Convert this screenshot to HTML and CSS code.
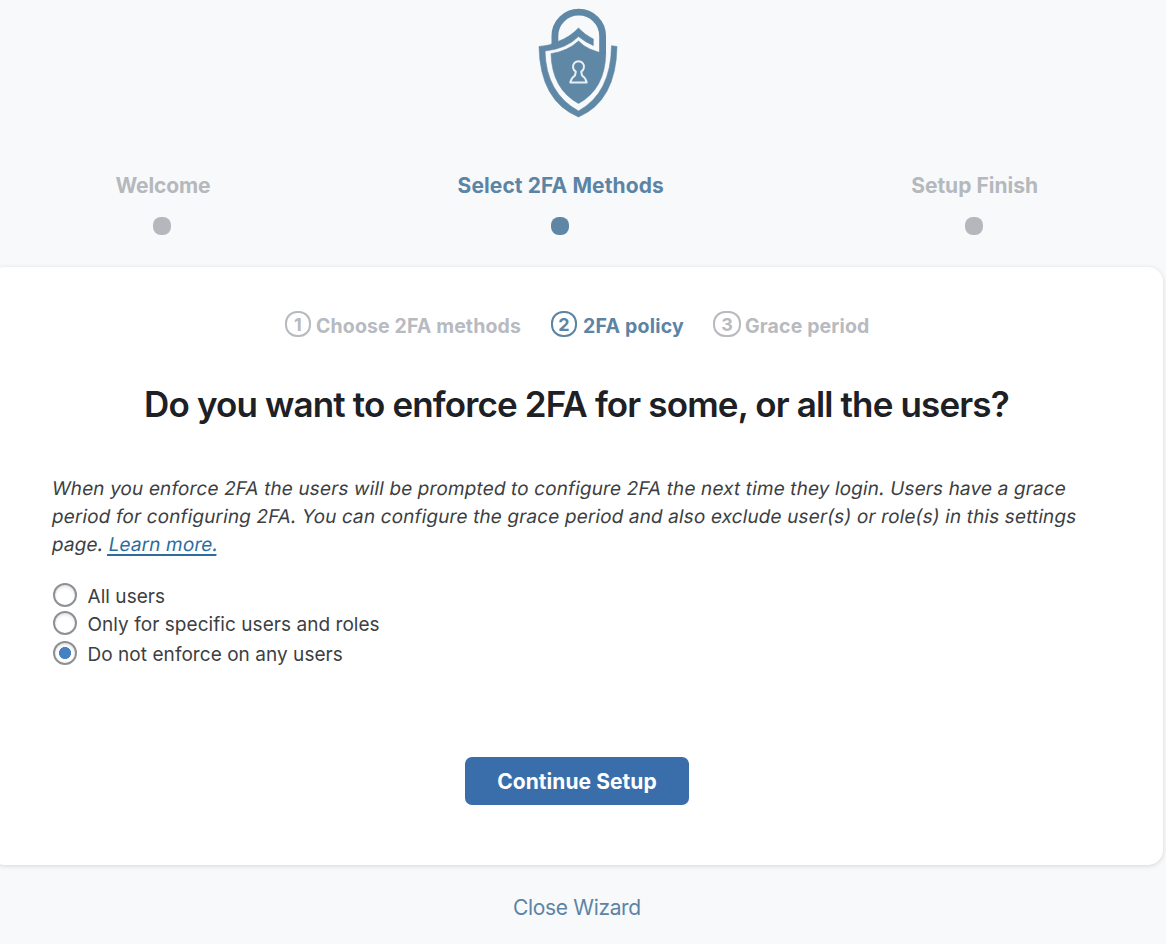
FILE: index.html
```html
<!DOCTYPE html>
<html lang="en">
<head>
<meta charset="utf-8">
<title>2FA Setup Wizard</title>
<link rel="stylesheet" href="styles.css">
</head>
<body>
<header class="brand">
<svg class="logo" viewBox="0 0 100 125" width="100" height="125" aria-hidden="true">
<path class="shackle" d="M26.900 46V36A23.850 23.850 0 0 1 74.600 36V54"/>
<path class="fill" d="M11 46.500Q21 46 30 41.500Q42 37 50.500 28Q57 35 65.300 39V45.500Q57 42 50.500 36.500Q38 49 17 51Q18 93 50.500 111Q83 93 83.500 45.700L89 46.500Q88 101 50.500 117Q12 101 11 46.500Z"/>
<path class="fill" d="M23 53.700Q40 51 50.500 41Q60 51 77.800 53.500Q77 89 50.500 103.500Q24 89 23 53.700Z"/>
<path class="keyhole" d="M47.800 71.500A5.500 5.500 0 1 1 53.200 71.500L54 75.500Q57.800 78 58.700 82.500H42.300Q43.200 78 47 75.500Z"/>
</svg>
</header>
<nav class="steps">
<div class="step step-welcome"><span class="step-name">Welcome</span><i class="dot"></i></div>
<div class="step step-select active"><span class="step-name">Select 2FA Methods</span><i class="dot"></i></div>
<div class="step step-finish"><span class="step-name">Setup Finish</span><i class="dot"></i></div>
</nav>
<main class="card">
<div class="substeps">
<div class="substep"><span class="num">1</span><span class="sub-one">Choose 2FA methods</span></div>
<div class="substep active"><span class="num">2</span><span class="sub-two">2FA policy</span></div>
<div class="substep"><span class="num num-wide">3</span><span class="sub-three">Grace period</span></div>
</div>
<h1 class="title">Do you want to enforce 2FA for some, or all the users?</h1>
<p class="intro"><span class="line line-a">When you enforce 2FA the users will be prompted to configure 2FA the next time they login. Users have a grace</span><span class="line line-b">period for configuring 2FA. You can configure the grace period and also exclude user(s) or role(s) in this settings</span><span class="line line-c">page. <a class="learn" href="#">Learn more.</a></span></p>
<div class="options">
<label class="option"><input class="radio" type="radio" name="policy"><span class="opt-a">All users</span></label>
<label class="option"><input class="radio" type="radio" name="policy"><span class="opt-b">Only for specific users and roles</span></label>
<label class="option option-last"><input class="radio" type="radio" name="policy" checked><span class="opt-c">Do not enforce on any users</span></label>
</div>
<button class="continue" type="button"><span class="continue-text">Continue Setup</span></button>
</main>
<footer class="footer"><a class="close" href="#">Close Wizard</a></footer>
</body>
</html>
```
FILE: styles.css
```css
* { box-sizing: border-box; }
body { margin: 0; height: 944px; overflow: hidden; background: #f8f9fb; font-family: Inter, "Liberation Sans", sans-serif; color: #3c4043; font-size: 20px; white-space: nowrap; }
.brand { height: 172px; padding-left: 528px; }
.logo { display: block; }
.fill { fill: #5f87a6; stroke: #5f87a6; stroke-width: 0.6; }
.shackle { fill: none; stroke: #5f87a6; stroke-width: 6.8; }
.keyhole { fill: none; stroke: #e8eff4; stroke-width: 2; stroke-linejoin: round; }
.steps { height: 95px; padding: 0 128px 0 115.5px; display: flex; justify-content: space-between; color: #b5b8bc; }
.step { display: flex; flex-direction: column; align-items: center; font-weight: 700; font-size: 21px; line-height: 28px; }
.step-welcome { letter-spacing: -0.15px; }
.step-select { letter-spacing: 0.1px; }
.dot { width: 18px; height: 18px; border-radius: 8px; background: #b4b8bc; margin: 17px 2px 0 0; }
.step.active, .substep.active { color: #5b84a5; }
.active .dot { background: #5f87a5; }
.card { width: 1173px; height: 598px; margin-left: -10px; padding: 43px 52px 0 62px; background: #fff; border-radius: 15px; box-shadow: 0 1px 5px rgba(0,0,0,.14); }
.substeps { height: 30px; display: flex; color: #b7babf; font-size: 19.5px; font-weight: 700; padding-left: 233px; }
.substep { display: flex; line-height: 32px; letter-spacing: 0.13px; }
.substep + .substep { margin-left: 29px; }
.substep + .substep.active { margin-left: 30px; letter-spacing: 0.22px; }
.substep.active .num { margin-right: 6px; }
.num { width: 26px; height: 26px; margin: 1px 5px 0 0; border: 2px solid currentColor; border-radius: 12px; text-align: center; font-size: 18px; line-height: 23px; letter-spacing: 0; }
.num-wide { width: 28px; margin-right: 4px; }
.title { margin: 42px 10px 0 0; height: 44px; line-height: 44px; font-size: 35px; font-weight: 620; letter-spacing: -0.85px; color: #1d2025; text-align: center; }
.intro { margin: 49px 0 0; font-size: 19px; line-height: 28px; letter-spacing: 0.12px; }
.line { display: block; transform: skewX(-10deg); }
.learn { color: #2c6c9f; text-decoration: underline; text-underline-offset: 3px; text-decoration-thickness: 2px; }
.options { margin-top: 22px; font-size: 19px; }
.option { display: flex; height: 28px; line-height: 32px; letter-spacing: 0.05px; }
.option-last { margin-top: 2px; }
.radio { appearance: none; width: 24px; height: 24px; margin: 2px 10.5px 0 1px; border: 2px solid #8d9095; border-radius: 50%; background: #fff; box-shadow: inset 0 2px 3px rgba(0,0,0,.1); }
.radio:checked { background: radial-gradient(circle, #4781c3 5.7px, #fff 6.3px); }
.continue { display: block; width: 224px; height: 48px; margin: 90px 0 0 413px; padding: 0; border: 0; border-radius: 7px; background: #3a6eab; color: #fff; font: 700 21px/50px Inter, "Liberation Sans", sans-serif; letter-spacing: 0.06px; }
.footer { padding-left: 513px; margin-top: 28px; font-size: 21px; line-height: 30px; letter-spacing: -0.33px; }
.close { color: #5b84a5; text-decoration: none; }
```
